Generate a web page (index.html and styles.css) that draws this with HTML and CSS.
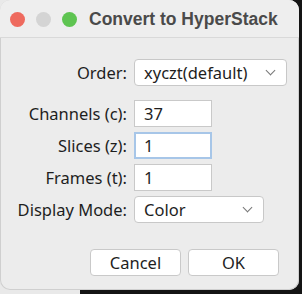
FILE: index.html
```html
<!DOCTYPE html>
<html lang="en">
<head>
  <meta charset="UTF-8" />
  <title>Convert to HyperStack</title>
  <link rel="stylesheet" href="styles.css">
</head>
<body>
  <div class="window">
    <div class="titlebar">
      <div class="lights">
        <span class="light red"></span>
        <span class="light grey"></span>
        <span class="light green"></span>
      </div>
      <div class="title">Convert to HyperStack</div>
    </div>

    <div class="form">
      <label class="lbl">Order:</label>
      <div class="select wide">xyczt(default)<span class="chev"></span></div>

      <label class="lbl first">Channels (c):</label>
      <input class="field first" type="text" value="37" />

      <label class="lbl">Slices (z):</label>
      <input class="field focus" type="text" value="1" />

      <label class="lbl">Frames (t):</label>
      <input class="field" type="text" value="1" />

      <label class="lbl">Display Mode:</label>
      <div class="select">Color<span class="chev"></span></div>
    </div>

    <div class="buttons">
      <button class="btn">Cancel</button>
      <button class="btn">OK</button>
    </div>
  </div>
</body>
</html>
```

FILE: styles.css
```css
body {
  margin: 0;
  width: 302px;
  height: 294px;
  overflow: hidden;
  background: linear-gradient(to right, #e9e9e9 80px, #141414 80px);
  font-family: "Noto Sans", sans-serif;
  color: #1e1e1e;
}
.window {
  width: 299px;
  height: 290px;
  background: #ececec;
  border-radius: 10px;
  box-shadow: inset 0 0 0 1px #cfcfcf;
  display: flex;
  flex-direction: column;
}
.titlebar {
  height: 37px;
  display: flex;
  align-items: center;
  border-bottom: 1px solid #d9d9d9;
  background: #eeeeee;
  border-radius: 10px 10px 0 0;
}
.lights {
  display: flex;
  gap: 11px;
  padding-left: 10px;
  padding-top: 2px;
}
.light {
  width: 15px;
  height: 15px;
  border-radius: 50%;
}
.red { background: #ee6a5e; }
.grey { background: #d4d4d4; }
.green { background: #5ec451; }
.title {
  margin-left: 12px;
  padding-top: 2px;
  font-family: "Liberation Sans", sans-serif;
  font-weight: bold;
  font-size: 17.5px;
  color: #4a4a4a;
}
.form {
  display: grid;
  grid-template-columns: 127px auto;
  column-gap: 7px;
  row-gap: 5px;
  align-items: center;
  justify-items: start;
  margin-top: 21px;
}
.lbl {
  justify-self: end;
  font-size: 16.5px;
}
.lbl.first, .field.first {
  margin-top: 9px;
}
.field {
  width: 78px;
  height: 27px;
  box-sizing: border-box;
  border: 1px solid #c9c9c9;
  background: #fff;
  padding: 0 9px;
  font-family: "Noto Sans", sans-serif;
  font-size: 16.5px;
  color: #1e1e1e;
  outline: none;
}
.field.focus {
  border: 2px solid #a7c6e8;
  padding: 0 8px;
}
.select {
  position: relative;
  width: 130px;
  height: 27px;
  box-sizing: border-box;
  border: 1px solid #c8c8c8;
  border-radius: 4px;
  background: #fff;
  padding-left: 9px;
  font-size: 16.5px;
  line-height: 25px;
}
.select.wide {
  width: 153px;
}
.chev {
  position: absolute;
  right: 12px;
  top: 7px;
  width: 6px;
  height: 6px;
  border-right: 1px solid #777;
  border-bottom: 1px solid #777;
  transform: rotate(45deg);
}
.buttons {
  display: flex;
  gap: 7px;
  margin-top: 26px;
  padding-left: 90px;
}
.btn {
  width: 91px;
  height: 27px;
  border: 1px solid #c9c9c9;
  border-radius: 4px;
  background: #fff;
  font-family: "Noto Sans", sans-serif;
  font-size: 16.5px;
  color: #1e1e1e;
}
```
